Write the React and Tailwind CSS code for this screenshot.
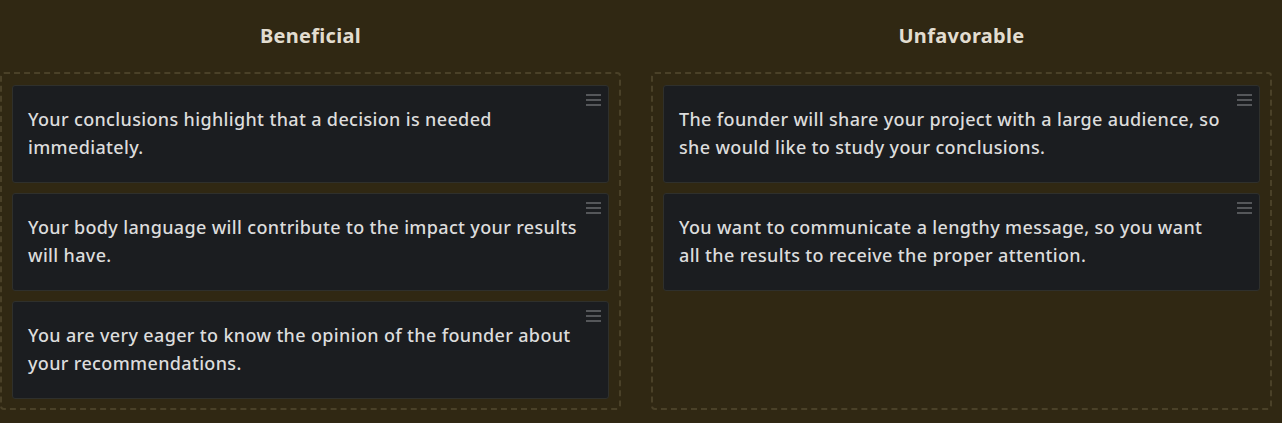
import React from "react";

const columns = [
	{
		title: "Beneficial",
		items: [
			["Your conclusions highlight that a decision is needed", "immediately."],
			["Your body language will contribute to the impact your results", "will have."],
			["You are very eager to know the opinion of the founder about", "your recommendations."],
		],
	},
	{
		title: "Unfavorable",
		items: [
			["The founder will share your project with a large audience, so", "she would like to study your conclusions."],
			["You want to communicate a lengthy message, so you want", "all the results to receive the proper attention."],
		],
	},
];

const Handle = () => (
	<div className="absolute top-[8px] right-[7px] flex flex-col gap-[3px]">
		<span className="block w-[15px] h-[2px] bg-[#55575a]" />
		<span className="block w-[15px] h-[2px] bg-[#55575a]" />
		<span className="block w-[15px] h-[2px] bg-[#55575a]" />
	</div>
);

const Card = ({ lines }) => (
	<div className="relative bg-[#1b1d20] border border-[#2f302c] rounded-[3px] pl-[15px] pr-6 pt-[19px] pb-[21px]">
		<Handle />
		<p className="text-[18px] leading-[28px] font-medium tracking-[0.35px] text-[#dcdcdc] whitespace-nowrap">
			{lines[0]}
			<br />
			{lines[1]}
		</p>
	</div>
);

export default function App() {
	return (
		<div
			className="w-[1282px] h-[423px] bg-[#302813] overflow-hidden"
			style={{ fontFamily: "'Noto Sans', sans-serif" }}
		>
			<div className="flex gap-[30px]">
				{columns.map((col) => (
					<div key={col.title} className="w-[621px] flex flex-col">
						<h2 className="h-[72px] pt-[22px] text-center text-[20px] leading-[28px] font-bold tracking-[0.3px] text-[#e2ddd0]">
							{col.title}
						</h2>
						<div className="h-[338px] border-2 border-dashed border-[#4a4128] rounded-[4px] px-[10px] pt-[11px] flex flex-col gap-[10px]">
							{col.items.map((lines, i) => (
								<Card key={i} lines={lines} />
							))}
						</div>
					</div>
				))}
			</div>
		</div>
	);
}
